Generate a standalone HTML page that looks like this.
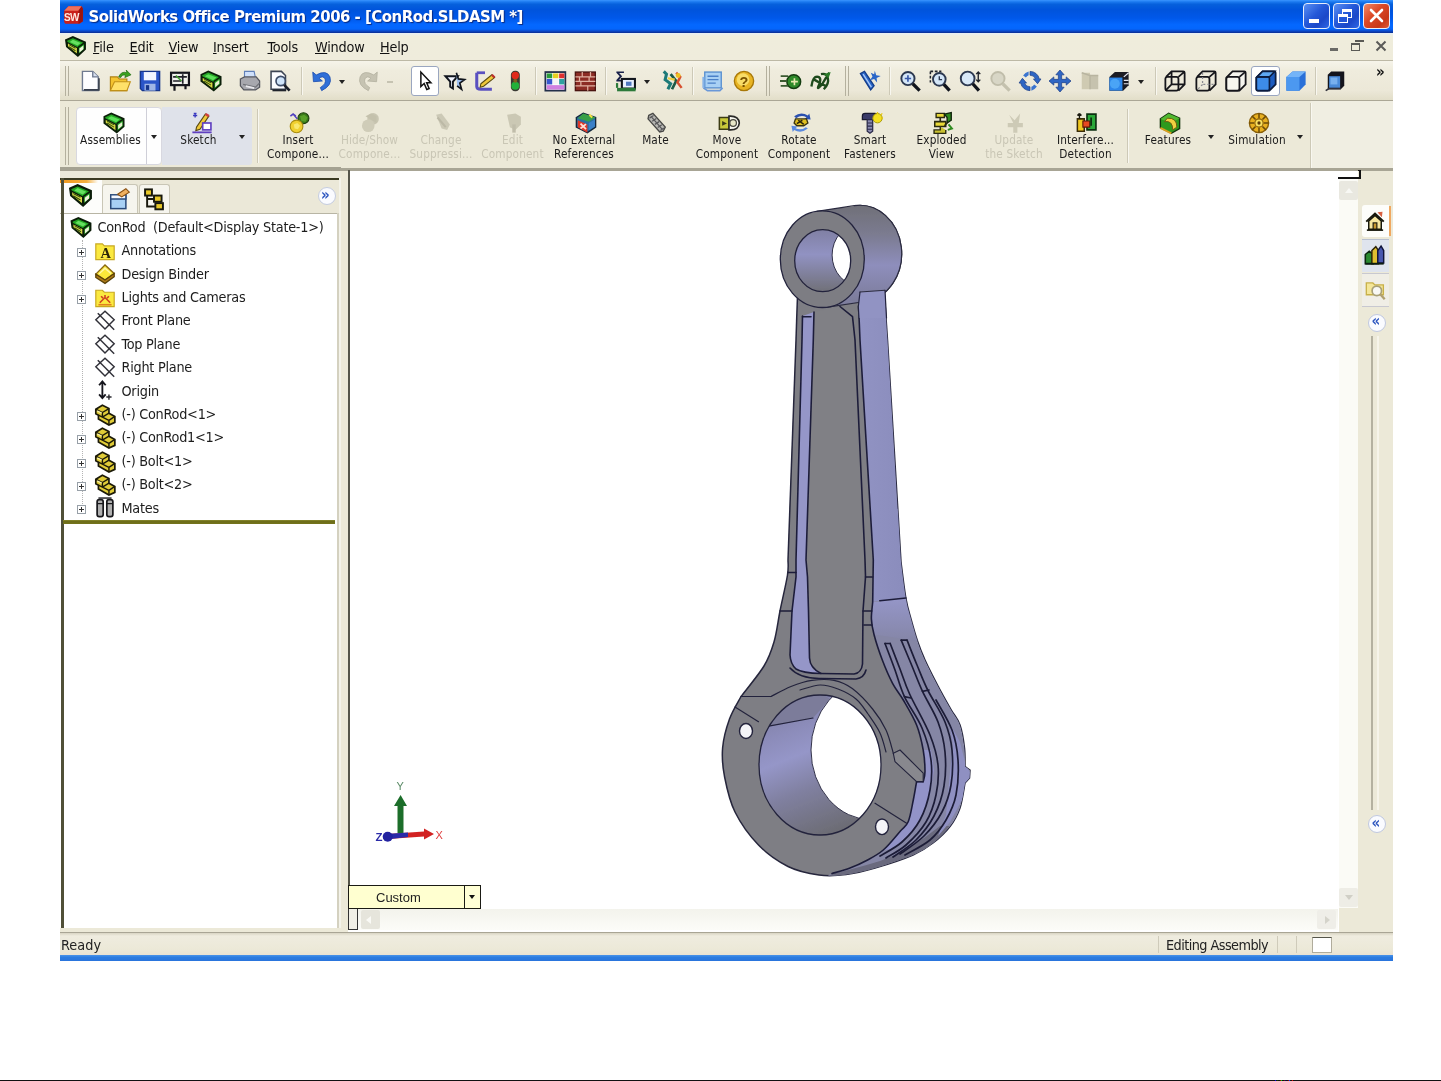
<!DOCTYPE html>
<html>
<head>
<meta charset="utf-8">
<title>SolidWorks Office Premium 2006 - [ConRod.SLDASM *]</title>
<style>
html,body{margin:0;padding:0;background:#fff;}
body{width:1441px;height:1081px;position:relative;overflow:hidden;font-family:"DejaVu Sans Condensed","DejaVu Sans","Liberation Sans",sans-serif;font-size:14.3px;color:#000;}
.abs{position:absolute;}
.ic{overflow:visible;}
#win{position:absolute;left:60px;top:0;width:1333px;height:961px;background:#ece9d8;overflow:hidden;filter:blur(0.45px);}
#title{position:absolute;left:0;top:0;width:1333px;height:33px;background:linear-gradient(#3a95ff 0%,#1a78ee 6%,#0660dc 13%,#0054dc 30%,#0058ea 55%,#0468ff 75%,#0466fc 88%,#0a48c8 94%,#0a2c90 100%);}
#title .t{position:absolute;left:28.5px;top:7.2px;font-weight:bold;font-size:16.6px;line-height:20px;color:#fff;letter-spacing:-0.5px;white-space:nowrap;text-shadow:1px 1px 1px #0a2a80;}
.tbtn{position:absolute;top:3px;width:27px;height:26px;border:1.5px solid #e8eefc;border-radius:4px;box-sizing:border-box;background:linear-gradient(135deg,#5a90f4,#2458d8 45%,#1c48c8 70%,#2f68e6);}
#menubar{position:absolute;left:0;top:33px;width:1333px;height:27px;background:linear-gradient(#e6eef6 0,#efeddc 3px,#efecdc 100%);}
#menubar span{position:absolute;top:5px;font-size:14.3px;line-height:18px;white-space:nowrap;color:#111;letter-spacing:-0.2px;}
#menubar u{text-decoration-thickness:1px;text-underline-offset:1px;}
#tb1{position:absolute;left:0;top:60px;width:1333px;height:40px;background:linear-gradient(#f6f4ea 0%,#efecdd 25%,#ece8d8 75%,#e2dec9 100%);border-top:1.5px solid #bdb9a6;box-sizing:border-box;}
#tb2{position:absolute;left:0;top:100px;width:1333px;height:70px;background:#ece9d8;border-top:1.5px solid #aba796;box-sizing:border-box;}
.grip{position:absolute;width:2px;border-left:1.5px solid #b4b09e;border-right:1.5px solid #b4b09e;box-sizing:content-box;}
.sep{position:absolute;width:1px;background:#cdc9b7;box-shadow:1px 0 0 #f8f7f0;}
.lbl{position:absolute;font-size:11.7px;line-height:14.4px;text-align:center;white-space:nowrap;transform:translateX(-50%);color:#1a1a1a;letter-spacing:0.15px;}
.dis{color:#c9c6b5;}
.dd{position:absolute;width:0;height:0;border-left:3.5px solid transparent;border-right:3.5px solid transparent;border-top:4px solid #222;}
#left{position:absolute;left:0;top:170px;width:289px;height:762px;background:#ece9d8;}
.tree{position:absolute;font-size:14.3px;line-height:18px;white-space:nowrap;color:#1c1c1c;letter-spacing:-0.25px;}
.pm{position:absolute;width:9px;height:9px;border:1px solid #98a0a8;background:#fff;box-sizing:border-box;}
.pm:before{content:"";position:absolute;left:1px;top:3px;width:5px;height:1px;background:#333;}
.pm:after{content:"";position:absolute;left:3px;top:1px;width:1px;height:5px;background:#333;}
#view{position:absolute;left:288px;top:170px;width:1012px;height:762px;background:#fff;}
#status{position:absolute;left:0;top:932px;width:1333px;height:24px;background:linear-gradient(#d9d5c4 0,#efecdf 3px,#ece9d8 70%,#e9e0d2 100%);border-top:1.5px solid #a9a595;box-sizing:border-box;}
#status span{position:absolute;top:3px;font-size:14.3px;line-height:18px;color:#222;letter-spacing:-0.55px;white-space:nowrap;}
#bottomblue{position:absolute;left:0;top:955px;width:1333px;height:6px;background:linear-gradient(#4a93e8,#2b7be0 40%,#2a74dc);}

</style>
</head>
<body>
<div id="win">
<div id="title">
<svg class="abs ic" style="left:2.5px;top:5px" width="21" height="20" viewBox="0 0 16 16" ><path d="M0.5,4.5 L4,1 H14.5 L15.5,3 V13 L13,15 H1.5 L0.5,13.5 Z" fill="#c8201a"/><path d="M0.5,4.5 L4,1 H14.5 L12,4.5 Z" fill="#f0705c"/><path d="M12,4.5 L14.5,1 L15.5,3 V13 L12,15 Z" fill="#9c1410"/><text x="6.3" y="12.6" font-family="Liberation Sans, sans-serif" font-weight="bold" font-size="8" text-anchor="middle" fill="#ffe8e0" letter-spacing="-0.6">SW</text></svg>
<div class="t">SolidWorks Office Premium 2006 - [ConRod.SLDASM *]</div>
<div class="tbtn" style="left:1243px"><div class="abs" style="left:5px;top:15px;width:10px;height:4px;background:#fff"></div></div>
<div class="tbtn" style="left:1273px"><div class="abs" style="left:8px;top:5px;width:10px;height:9px;border:1.5px solid #fff;border-top-width:3px;box-sizing:border-box"></div><div class="abs" style="left:4px;top:10px;width:10px;height:9px;border:1.5px solid #fff;border-top-width:3px;box-sizing:border-box;background:#2458d8"></div></div>
<div class="tbtn" style="left:1303px;background:linear-gradient(135deg,#f08868,#dc4a28 40%,#c83818 75%,#e05a34)"><svg class="abs" style="left:5px;top:4px" width="15" height="15" viewBox="0 0 15 15"><path d="M2,2 L13,13 M13,2 L2,13" stroke="#fff" stroke-width="2.6" stroke-linecap="round"/></svg></div>
</div>
<div id="menubar">
<svg class="abs ic" style="left:5px;top:3px" width="21" height="21" viewBox="0 0 16 16" ><path d="M0.8,3.2 L6,0.8 L15.2,4.8 V10 L9.8,15 L1.5,8 Z" fill="#23a623" stroke="#0a1c08" stroke-width="1.5"/><path d="M6,2.8 L12,5.4 L9.5,7.3 L3.6,4.5 Z" fill="#66e060"/><path d="M1.8,5 L9.5,9 V14.3 L1.8,8 Z" fill="#dcdc48" stroke="#0a1c08" stroke-width=".9"/><path d="M3,6.6 L8,9.3 M3,8.2 L8,11.2" stroke="#33500e" stroke-width=".8"/><path d="M10,8.6 L15,5 M10,8.6 V14.6" fill="none" stroke="#0a1c08" stroke-width="1.2"/><path d="M11,9.6 L14,7.3 V10 L11,12.6 Z" fill="#f0f4dc"/></svg>
<span style="left:33px"><u>F</u>ile</span>
<span style="left:69.5px"><u>E</u>dit</span>
<span style="left:108.5px"><u>V</u>iew</span>
<span style="left:153px"><u>I</u>nsert</span>
<span style="left:207.5px"><u>T</u>ools</span>
<span style="left:255px"><u>W</u>indow</span>
<span style="left:320px"><u>H</u>elp</span>
<div class="abs" style="left:1270px;top:15px;width:8px;height:2.5px;background:#6a6a66"></div>
<div class="abs" style="left:1291px;top:10px;width:9px;height:8px;border:1.3px solid #5a5a56;border-top-width:2.5px;box-sizing:border-box"></div>
<div class="abs" style="left:1294.5px;top:6.5px;width:9px;height:2.5px;background:#5a5a56"></div>
<svg class="abs ic" style="left:1315px;top:7px" width="12" height="12" viewBox="0 0 12 12"><path d="M1.5,1.5 L10.5,10.5 M10.5,1.5 L1.5,10.5" stroke="#5a5a58" stroke-width="2"/></svg>
</div>
<div id="tb1">
<div class="grip" style="left:5px;top:5px;height:30px"></div>
<svg class="abs ic" style="left:18.5px;top:8.5px" width="22" height="22" viewBox="0 0 16 16" ><path d="M2.5,1 H10 L14,5 V15 H2.5 Z" fill="#fdfdff" stroke="#6f7a90" stroke-width="1"/><path d="M10,1 V5 H14" fill="#d8e0f0" stroke="#6f7a90" stroke-width="1"/><path d="M3.5,14.5 H14.5 V6" fill="none" stroke="#39404e" stroke-width="1.2"/></svg>
<svg class="abs ic" style="left:49px;top:8.5px" width="22" height="22" viewBox="0 0 16 16" ><path d="M1,5 H6 L7.5,6.5 H13 V15 H1 Z" fill="#f4c430" stroke="#b08010" stroke-width=".8"/><path d="M1,15 L4,8.5 H15.5 L13,15 Z" fill="#ffe169" stroke="#c09018" stroke-width=".8"/><path d="M7,5 Q9,0.5 13,2 L12.5,0 L16,3.5 L11.5,5.5 L12,3.8 Q9.5,3 8.5,5.5 Z" fill="#3aa21e" stroke="#1e6a10" stroke-width=".5"/></svg>
<svg class="abs ic" style="left:79px;top:8.5px" width="22" height="22" viewBox="0 0 16 16" ><path d="M1,1 H15 V15 H2.5 L1,13.5 Z" fill="#2a55c8" stroke="#16358a" stroke-width="1"/><rect x="3.5" y="1.5" width="9" height="6" fill="#f2f6ff"/><rect x="4" y="10" width="8" height="5" fill="#9fb6e6"/><rect x="5" y="11" width="2.4" height="3.5" fill="#16358a"/></svg>
<svg class="abs ic" style="left:109px;top:8.5px" width="22" height="22" viewBox="0 0 16 16" ><rect x="1.5" y="2" width="13" height="9" fill="#f2f2ee" stroke="#15151c" stroke-width="1.6"/><path d="M3,5 H13 M3,8 H9 M10,3 V10" stroke="#202028" stroke-width="1.2"/><path d="M4,11 V15 M12,11 V14" stroke="#15151c" stroke-width="1.6"/><path d="M5,4 L9,8" stroke="#40a030" stroke-width="1.2"/></svg>
<svg class="abs ic" style="left:139.5px;top:8.5px" width="22" height="22" viewBox="0 0 16 16" ><path d="M1,3.5 L6,1 L15,5 V10.5 L10,14.8 L1,8 Z" fill="#25a825" stroke="#0c200a" stroke-width="1.3"/><path d="M6,3 L12,5.5 L9.5,7.5 L3.5,4.6 Z" fill="#5ee05a"/><path d="M1.5,5 L9.5,9 V14.2 L1.5,8 Z" fill="#d8d840" stroke="#0c200a" stroke-width=".9"/><path d="M3,6.5 L8,9.2 M3,8 L8,11" stroke="#3a5a10" stroke-width=".8"/><path d="M10,8.5 L15,5 M10,8.5 V14.5" fill="none" stroke="#0c200a" stroke-width="1.1"/><path d="M11,9.5 L14,7.2 V10 L11,12.6 Z" fill="#e8f0d0"/></svg>
<svg class="abs ic" style="left:179px;top:8.5px" width="22" height="22" viewBox="0 0 16 16" ><path d="M4,1 H11 L12,6 H4 Z" fill="#cfe0fa" stroke="#6080b8" stroke-width=".8"/><path d="M1,6.5 L4,5 H12.5 L15,8 V12.5 L12,14.5 H3.5 L1,11.5 Z" fill="#a7a8ae" stroke="#54565e" stroke-width=".9"/><path d="M3,10.5 L12,12.5 L15,9.5" fill="none" stroke="#707278" stroke-width=".9"/><path d="M5,11.8 L11,13.2" stroke="#e8e8ec" stroke-width="1.3"/></svg>
<svg class="abs ic" style="left:209px;top:8.5px" width="22" height="22" viewBox="0 0 16 16" ><path d="M1.5,1 H9 L12,4 V14 H1.5 Z" fill="#fbfcff" stroke="#3c4454" stroke-width="1.1"/><path d="M2.5,14.8 H12.5" stroke="#20242c" stroke-width="1.4"/><circle cx="8.5" cy="8" r="3.4" fill="#cfe4fa" stroke="#3d4c68" stroke-width="1.2"/><path d="M11,10.8 L15,15" stroke="#1a1e28" stroke-width="2"/></svg>
<div class="sep" style="left:241px;top:6px;height:28px"></div>
<svg class="abs ic" style="left:250px;top:8.5px" width="22" height="22" viewBox="0 0 16 16" ><path d="M2,1.5 L2.5,8.5 L9,8 L6.6,6 Q9.5,3.8 11,6.5 Q12.2,10 7.5,12.8 L8.5,15 Q16.5,11 14.5,5 Q12,-0.5 4.5,3.6 Z" fill="#2f6fd8" stroke="#1d4fb0" stroke-width=".6"/></svg>
<div class="dd" style="left:279.0px;top:19px;border-top-color:#222"></div>
<svg class="abs ic" style="left:298px;top:8.5px" width="22" height="22" viewBox="0 0 16 16" ><path d="M14,1.5 L13.5,8.5 L7,8 L9.4,6 Q6.5,3.8 5,6.5 Q3.8,10 8.5,12.8 L7.5,15 Q-0.5,11 1.5,5 Q4,-0.5 11.5,3.6 Z" fill="#c6c3b2" stroke="#b4b1a0" stroke-width=".6"/></svg>
<div class="abs" style="left:327px;top:20px;width:6px;height:2px;background:#c6c3b2"></div>
<div class="abs" style="left:350.5px;top:5px;width:28.5px;height:30px;background:#fff;border:1px solid #9aa6c0;border-radius:3px;box-sizing:border-box"></div>
<svg class="abs ic" style="left:354px;top:8.5px" width="22" height="22" viewBox="0 0 16 16" ><path d="M5,1.5 V12 L7.4,9.8 L9.3,14.2 L11,13.5 L9.2,9.2 H12.3 Z" fill="#fff" stroke="#111" stroke-width="1.1"/></svg>
<svg class="abs ic" style="left:384px;top:8.5px" width="22" height="22" viewBox="0 0 16 16" ><path d="M1,4.5 H10 L6.5,8.5 V13.5 L4.5,12.2 V8.5 Z" fill="#f0f4ff" stroke="#10141c" stroke-width="1.4"/><path d="M9,2 L10.5,6.5 L15,7 L11.5,9.5 L12.8,14 L9.5,11.5" fill="#9ec0f0" stroke="#10141c" stroke-width="1.2"/></svg>
<svg class="abs ic" style="left:414px;top:8.5px" width="22" height="22" viewBox="0 0 16 16" ><path d="M2,2 V12 Q2,14 5,14 H13" fill="none" stroke="#5a50c0" stroke-width="2.2"/><path d="M2,2 H8" stroke="#5a50c0" stroke-width="2"/><path d="M5,10 L13,3.5 L15,5.5 L7,11.8 L4.5,12.5 Z" fill="#f0c83a" stroke="#5a4a10" stroke-width=".8"/><path d="M13,3.5 L15,5.5" stroke="#c03030" stroke-width="1.6"/></svg>
<svg class="abs ic" style="left:444px;top:8.5px" width="22" height="22" viewBox="0 0 16 16" ><rect x="5" y="0.5" width="6.5" height="15" rx="3" fill="#3a3a32"/><circle cx="8.2" cy="4" r="2.7" fill="#e02a1c"/><circle cx="8.2" cy="11.5" r="2.9" fill="#22b03a"/><circle cx="8.2" cy="7.8" r="1.4" fill="#806020"/></svg>
<div class="sep" style="left:475px;top:6px;height:28px"></div>
<svg class="abs ic" style="left:483.5px;top:8.5px" width="22" height="22" viewBox="0 0 16 16" ><rect x="1" y="1.5" width="14.5" height="13.5" fill="#fff" stroke="#23304a" stroke-width="1.3"/><rect x="2" y="2.5" width="4" height="3.5" fill="#2a9a3a"/><rect x="6.5" y="2.5" width="4" height="3.5" fill="#e8d020"/><rect x="11" y="2.5" width="3.8" height="3.5" fill="#e03030"/><rect x="2" y="6.5" width="4" height="4" fill="#3858d0"/><rect x="6.5" y="6.5" width="4" height="4" fill="#f4f4f4"/><rect x="11" y="6.5" width="3.8" height="4" fill="#30a0a0"/><rect x="2" y="11" width="12.8" height="3.2" fill="#d080e0"/></svg>
<svg class="abs ic" style="left:514px;top:8.5px" width="22" height="22" viewBox="0 0 16 16" ><rect x="1" y="1.5" width="14.5" height="13.5" fill="#8c2c24" stroke="#4a1410" stroke-width="1"/><path d="M1,5 H15.5 M1,8.3 H15.5 M1,11.6 H15.5 M6,1.5 V5 M11,5 V8.3 M5,8.3 V11.6 M10,11.6 V15 M12,1.5 V5 M4,5 V8.3" stroke="#e0b0a0" stroke-width=".9"/></svg>
<div class="sep" style="left:545px;top:6px;height:28px"></div>
<svg class="abs ic" style="left:555px;top:8.5px" width="22" height="22" viewBox="0 0 16 16" ><path d="M1,1 H6.5 V2.2 H3 L5.2,4.6 L3,7 H6.5 V8.3 H1 V7.3 L3.4,4.6 L1,2 Z" fill="#18204a"/><rect x="5" y="6.5" width="9.5" height="7" fill="#e8f0ff" stroke="#10141c" stroke-width="1.5"/><rect x="8" y="8.5" width="4" height="3" fill="#5078c0"/><path d="M1.5,13 H15 V15.5 H1.5 Z" fill="#2c7a3a"/><path d="M1.5,9.5 V13" stroke="#2c7a3a" stroke-width="1.6"/></svg>
<div class="dd" style="left:583.5px;top:19px;border-top-color:#222"></div>
<svg class="abs ic" style="left:601px;top:8.5px" width="22" height="22" viewBox="0 0 16 16" ><path d="M2,1 L4,3 L3,7 L7,10 L5,14" fill="none" stroke="#1d7a78" stroke-width="2.2"/><path d="M7,3 L11,8 L8,14" fill="none" stroke="#1d5a48" stroke-width="2"/><path d="M11,2 L14,5 L12,9 L15,13" fill="none" stroke="#d85030" stroke-width="1.8"/><circle cx="12.5" cy="4" r="1.8" fill="#f0c020"/><path d="M5,6 L10,7" stroke="#f0d040" stroke-width="1.6"/></svg>
<div class="sep" style="left:632px;top:6px;height:28px"></div>
<svg class="abs ic" style="left:642px;top:8.5px" width="22" height="22" viewBox="0 0 16 16" ><rect x="2" y="1.5" width="12" height="11.5" fill="#a8d0f4" stroke="#5a90d0" stroke-width="1"/><path d="M4,4.5 H12 M4,7 H12 M4,9.5 H10" stroke="#4a80c8" stroke-width="1"/><path d="M1,13 L4,15 H13 L15,13" fill="none" stroke="#6a98d8" stroke-width="1.2"/><path d="M1,5 V13" stroke="#88b4e8" stroke-width="1.5"/></svg>
<svg class="abs ic" style="left:673px;top:8.5px" width="22" height="22" viewBox="0 0 16 16" ><circle cx="8" cy="8" r="7" fill="#e8b424" stroke="#a87808" stroke-width="1"/><circle cx="7.3" cy="7" r="4.6" fill="#f8dc68"/><text x="8" y="12" font-family="Liberation Sans, sans-serif" font-weight="bold" font-size="10.5" text-anchor="middle" fill="#7a5200">?</text></svg>
<div class="grip" style="left:706px;top:5px;height:30px"></div>
<svg class="abs ic" style="left:719.5px;top:8.5px" width="22" height="22" viewBox="0 0 16 16" ><circle cx="10" cy="8.5" r="5" fill="#2f8a2a" stroke="#143c10" stroke-width="1.1"/><path d="M0.5,4.5 H6 M0,8 H5 M0.5,11.5 H6" stroke="#3a5a30" stroke-width="1.3"/><path d="M8,8.5 H13 M10.5,6 V11" stroke="#e8e8b0" stroke-width="1.2"/></svg>
<svg class="abs ic" style="left:749.5px;top:8.5px" width="22" height="22" viewBox="0 0 16 16" ><path d="M1,12 Q2,4 6,5 Q9,6 6,12 Q5,15 9,10 Q12,5 14,2 M8,3 Q12,2 13,6 Q14,10 10,14 M3,7 L12,12" fill="none" stroke="#1e4a1c" stroke-width="1.7"/><path d="M10,3 L15,1.5 L13.5,6" fill="#2a7a28"/></svg>
<div class="grip" style="left:785px;top:5px;height:30px"></div>
<svg class="abs ic" style="left:799px;top:8.5px" width="22" height="22" viewBox="0 0 16 16" ><path d="M1,2.5 L4,1 L11,11.5 L8.5,14.5 Z" fill="#2a66c8" stroke="#143c88" stroke-width=".9"/><path d="M3,3 L9,12.5" stroke="#a8c8f8" stroke-width="1"/><path d="M11.5,0.5 L12.5,3.8 L15.8,4.4 L12.8,5.8 L13.2,9 L11,6.6 L8,7.4 L9.8,4.8 L8.6,2 L11,3 Z" fill="#2a66c8"/></svg>
<div class="sep" style="left:829px;top:6px;height:28px"></div>
<svg class="abs ic" style="left:838.5px;top:8.5px" width="22" height="22" viewBox="0 0 16 16" ><circle cx="6.5" cy="6.2" r="4.8" fill="#d4e6f8" stroke="#2c3850" stroke-width="1.4"/><path d="M10,10 L15,15" stroke="#10141c" stroke-width="2.4"/><path d="M4.2,6.2 H8.8 M6.5,3.9 V8.5" stroke="#3858a8" stroke-width="1.2"/></svg>
<svg class="abs ic" style="left:868.5px;top:8.5px" width="22" height="22" viewBox="0 0 16 16" ><path d="M1,1 H9 M1,1 V9" fill="none" stroke="#20242c" stroke-width="1.1" stroke-dasharray="2 1.2"/><circle cx="7.5" cy="6.8" r="4.6" fill="#d4e6f8" stroke="#2c3850" stroke-width="1.4"/><path d="M10.8,10.4 L15,15" stroke="#10141c" stroke-width="2.4"/><path d="M7.5,4.5 V7 H9.5" fill="none" stroke="#2c3850" stroke-width="1"/></svg>
<svg class="abs ic" style="left:898.5px;top:8.5px" width="22" height="22" viewBox="0 0 16 16" ><circle cx="6.3" cy="6.2" r="5" fill="#d8e8f8" stroke="#2c3850" stroke-width="1.4"/><path d="M10,10 L14.5,15" stroke="#10141c" stroke-width="2.4"/><path d="M14,1.5 V8.5 M12.5,3 L14,1.5 L15.5,3 M12.5,7 L14,8.5 L15.5,7" fill="none" stroke="#20242c" stroke-width="1"/></svg>
<svg class="abs ic" style="left:928.5px;top:8.5px" width="22" height="22" viewBox="0 0 16 16" ><circle cx="6.5" cy="6.2" r="4.8" fill="#d8d6c6" stroke="#c0bdaa" stroke-width="1.4"/><path d="M10,10 L15,15" stroke="#c4c1ae" stroke-width="2.4"/></svg>
<svg class="abs ic" style="left:958.5px;top:8.5px" width="22" height="22" viewBox="0 0 16 16" ><path d="M8,1 A7,7 0 0 1 14.8,6.5 L16,6.5 L13.5,10 L10.5,6.5 L12,6.5 A4.2,4.2 0 0 0 8,3.8 Z" fill="#2f66c4" stroke="#1a3c84" stroke-width=".5"/><path d="M8,15 A7,7 0 0 1 1.2,9.5 L0,9.5 L2.5,6 L5.5,9.5 L4,9.5 A4.2,4.2 0 0 0 8,12.2 Z" fill="#2f66c4" stroke="#1a3c84" stroke-width=".5"/><path d="M3,4 A7,7 0 0 1 7,1 V3.8 A4.2,4.2 0 0 0 5,5.5 Z M13,12 A7,7 0 0 1 9,15 V12.2 A4.2,4.2 0 0 0 11,10.5 Z" fill="#3a74d0"/></svg>
<svg class="abs ic" style="left:988.5px;top:8.5px" width="22" height="22" viewBox="0 0 16 16" ><path d="M8,0 L11,3.5 H9.2 V6.8 H12.5 V5 L16,8 L12.5,11 V9.2 H9.2 V12.5 H11 L8,16 L5,12.5 H6.8 V9.2 H3.5 V11 L0,8 L3.5,5 V6.8 H6.8 V3.5 H5 Z" fill="#2f66c4" stroke="#1a3c84" stroke-width=".5"/></svg>
<svg class="abs ic" style="left:1018.5px;top:8.5px" width="22" height="22" viewBox="0 0 16 16" ><rect x="2" y="2" width="6" height="12" fill="#cfcab2"/><rect x="8" y="4" width="6" height="10" fill="#c6c2ae"/><path d="M2,2 L8,4 V14 M8,4 H14" stroke="#b8b4a0" fill="none"/></svg>
<svg class="abs ic" style="left:1048px;top:8.5px" width="22" height="22" viewBox="0 0 16 16" ><path d="M1,5 L5,1.5 H15 V11 L11,15 H1 Z" fill="#1c1c24"/><path d="M1,5.5 H10.5 V15 H1 Z" fill="#2d86ea"/><circle cx="5" cy="10" r="3.6" fill="#4aa4f6"/><path d="M11.5,5 L15,2 M11.5,7.5 H15 M11.5,10 H15" stroke="#e8e8f0" stroke-width=".9"/></svg>
<div class="dd" style="left:1077.5px;top:19px;border-top-color:#222"></div>
<div class="sep" style="left:1095px;top:6px;height:28px"></div>
<svg class="abs ic" style="left:1104px;top:8.5px" width="22" height="22" viewBox="0 0 16 16" ><g fill="none" stroke="#15151a" stroke-width="1.3"><rect x="1" y="5" width="9.5" height="10" rx="1.5"/><path d="M1.5,5 L5.5,1 H14 Q15,1 15,2 V10.5 L10.5,15 M10.5,5 L15,1.2 M5.5,1 V10.5 H15 M5.5,10.5 L1,15"/></g></svg>
<svg class="abs ic" style="left:1134.5px;top:8.5px" width="22" height="22" viewBox="0 0 16 16" ><g fill="none" stroke="#15151a" stroke-width="1.3"><rect x="1" y="5" width="9.5" height="10" rx="1.5"/><path d="M1.5,5 L5.5,1 H14 Q15,1 15,2 V10.5 L10.5,15 M10.5,5 L15,1.2"/><path d="M5.5,2 V10.5 H14 M5.5,10.5 L2,14" stroke="#8a8a90" stroke-width=".9" stroke-dasharray="1.5 1.5"/></g></svg>
<svg class="abs ic" style="left:1164.5px;top:8.5px" width="22" height="22" viewBox="0 0 16 16" ><g fill="#f6f5ee" stroke="#15151a" stroke-width="1.3"><path d="M1.5,5 L5.5,1 H14 Q15,1 15,2 V10.5 L10.5,15 H2 Q1,15 1,14 V5.5 Z"/><rect x="1" y="5" width="9.5" height="10" rx="1.5"/><path d="M10.5,5 L15,1.2" fill="none"/></g></svg>
<div class="abs" style="left:1191px;top:5px;width:29px;height:30px;background:#fff;border:1px solid #9aa6c0;border-radius:3px;box-sizing:border-box"></div>
<svg class="abs ic" style="left:1195px;top:8.5px" width="22" height="22" viewBox="0 0 16 16" ><path d="M1.5,5 L5.5,1 H14 Q15,1 15,2 V10.5 L10.5,15 H2 Q1,15 1,14 V5.5 Z" fill="#1d5cc0" stroke="#0c1c40" stroke-width="1.3"/><rect x="1" y="5" width="9.5" height="10" rx="1.2" fill="#3d8be8" stroke="#0c1c40" stroke-width="1.2"/><path d="M1.5,5 L5.5,1 H14.5 L10.5,5 Z" fill="#5ea8f4" stroke="#0c1c40" stroke-width="1.1"/></svg>
<svg class="abs ic" style="left:1225px;top:8.5px" width="22" height="22" viewBox="0 0 16 16" ><path d="M1,5 L5.5,1 H15 V10.5 L10.5,15 H1 Z" fill="#2a70d8"/><rect x="1" y="5" width="9.5" height="10" fill="#4c98f0"/><path d="M1,5 L5.5,1 H15 L10.5,5 Z" fill="#74b4f8"/></svg>
<div class="sep" style="left:1255px;top:6px;height:28px"></div>
<svg class="abs ic" style="left:1264.5px;top:8.5px" width="22" height="22" viewBox="0 0 16 16" ><path d="M2,3.5 L4.5,1 H14 V11.5 L11.5,14 H2 Z" fill="#14141c"/><rect x="3" y="4.5" width="8" height="8.5" fill="#4a8ad8"/><rect x="4" y="5.5" width="5" height="5" fill="#78b0ee"/><path d="M0.5,15 L3,13.5 H11.5" stroke="#30303a" stroke-width="1.2" fill="none"/></svg>
<div class="abs" style="left:1316px;top:3px;font-size:15px;font-weight:bold;line-height:16px;color:#111;filter:blur(.3px)">»</div>
</div>
<div id="tb2">
<div class="grip" style="left:5px;top:6px;height:58px"></div>
<div class="abs" style="left:16px;top:6px;width:86px;height:58px;background:#fefefe;border:1px solid #d8d8e0;border-radius:4px;box-sizing:border-box"></div>
<div class="abs" style="left:86px;top:7px;width:1px;height:56px;background:#cfcfd8"></div>
<div class="abs" style="left:102px;top:6px;width:90px;height:58px;background:#dfe2ea;border-radius:0 3px 3px 0"></div>
<div class="sep" style="left:197px;top:8px;height:54px"></div>
<div class="abs" style="left:1251px;top:0;width:82px;height:69px;background:#f0eee2"></div>
<div class="sep" style="left:1250px;top:2px;height:66px"></div>
<svg class="abs ic" style="left:42.5px;top:10.5px" width="22" height="22" viewBox="0 0 16 16" ><path d="M1,3.5 L6,1 L15,5 V10.5 L10,14.8 L1,8 Z" fill="#25a825" stroke="#0c200a" stroke-width="1.3"/><path d="M6,3 L12,5.5 L9.5,7.5 L3.5,4.6 Z" fill="#5ee05a"/><path d="M1.5,5 L9.5,9 V14.2 L1.5,8 Z" fill="#d8d840" stroke="#0c200a" stroke-width=".9"/><path d="M3,6.5 L8,9.2 M3,8 L8,11" stroke="#3a5a10" stroke-width=".8"/><path d="M10,8.5 L15,5 M10,8.5 V14.5" fill="none" stroke="#0c200a" stroke-width="1.1"/><path d="M11,9.5 L14,7.2 V10 L11,12.6 Z" fill="#e8f0d0"/></svg><div class="lbl" style="left:50.5px;top:32px">Assemblies</div>
<div class="dd" style="left:91.0px;top:34px;border-top-color:#222"></div>
<svg class="abs ic" style="left:130.5px;top:10.5px" width="22" height="22" viewBox="0 0 16 16" ><path d="M2,1 L4,1 M3,1 V4 M1.5,2.5 H4.5" stroke="#3838c0" stroke-width="1"/><path d="M4,11 L10.5,1.5 L13,3 L6.5,12.5 L3.5,13.5 Z" fill="#f0c83a" stroke="#5a4a10" stroke-width=".8"/><path d="M10.5,1.5 L13,3" stroke="#d04040" stroke-width="1.8"/><rect x="8.5" y="8" width="6" height="5" fill="#fff" stroke="#6040c0" stroke-width="1.2"/><path d="M1,14.8 H15" stroke="#6040c0" stroke-width="1.3"/></svg><div class="lbl" style="left:138.5px;top:32px">Sketch</div>
<div class="dd" style="left:179.0px;top:34px;border-top-color:#222"></div>
<svg class="abs ic" style="left:228.5px;top:10.5px" width="22" height="22" viewBox="0 0 16 16" ><circle cx="10.5" cy="4.5" r="4" fill="#3a7a1a" stroke="#1c3c0c" stroke-width=".8"/><path d="M8,3 L11,2 L13.5,4 L12,7 L9,6.5 Z" fill="#58a028"/><circle cx="5.5" cy="10.5" r="4.6" fill="#f0d030" stroke="#a88c10" stroke-width=".8"/><path d="M3.5,9 L6,8 L8,10 L6.5,12.5 L4,12 Z" fill="#f8e870"/><path d="M1,3 L3,1.5 L5,3 M3,1.5 L6,5" fill="none" stroke="#5040c0" stroke-width="1.1"/></svg><div class="lbl" style="left:238px;top:32px">Insert<br>Compone...</div>
<svg class="abs ic" style="left:300.0px;top:10.5px" width="22" height="22" viewBox="0 0 16 16" ><circle cx="9.5" cy="5" r="4.2" fill="#c9c6b2"/><circle cx="6" cy="10" r="4.6" fill="#cfccb8"/><path d="M4,3 L8,1 L12,3 V8" fill="#c4c1ac"/></svg><div class="lbl dis" style="left:309.5px;top:32px">Hide/Show<br>Compone...</div>
<svg class="abs ic" style="left:371.5px;top:10.5px" width="22" height="22" viewBox="0 0 16 16" ><path d="M3,2 L7,1 L13,9 L11,13 L7,12 Z" fill="#ccc9b6"/><path d="M4,4 L10,11" stroke="#bcb9a6" stroke-width="1.5"/></svg><div class="lbl dis" style="left:381px;top:32px">Change<br>Suppressi...</div>
<svg class="abs ic" style="left:443.0px;top:10.5px" width="22" height="22" viewBox="0 0 16 16" ><path d="M3,2 L9,1 L13,3.5 V9 L9,13 L5,11 Z" fill="#cbc8b4"/><path d="M8,9 V15" stroke="#c0bdaa" stroke-width="2.5"/></svg><div class="lbl dis" style="left:452.5px;top:32px">Edit<br>Component</div>
<svg class="abs ic" style="left:514.5px;top:10.5px" width="22" height="22" viewBox="0 0 16 16" ><path d="M1,4 L6,1 L15,4 V11 L9,15 L1,11 Z" fill="#2a6ea0" stroke="#14283c" stroke-width="1"/><path d="M6,1 L15,4 L10,7 L2,4.5 Z" fill="#38a048"/><path d="M2,6 L9,9 V15 L2,11 Z" fill="#e03828"/><path d="M4,8.5 L8,12.5 M8,8.8 L4,12" stroke="#ffe0d8" stroke-width="1.3"/><path d="M10,8 L14.5,5.5 V10.5 L10,13.5 Z" fill="#3a80c8"/><path d="M10.5,2 L12.5,4" stroke="#f0e040" stroke-width="1.4"/></svg><div class="lbl" style="left:524px;top:32px">No External<br>References</div>
<svg class="abs ic" style="left:586.0px;top:10.5px" width="22" height="22" viewBox="0 0 16 16" ><path d="M2,2.5 L5,1 L14,11 L12.5,14 L10,14.5 L1.5,5 Z" fill="#b8b8b4" stroke="#484846" stroke-width="1"/><path d="M3.5,3 L12,12.8 M2.5,4.5 L5.5,2.5 M4.5,6.8 L7.5,4.8 M6.5,9 L9.5,7 M8.5,11.2 L11.5,9.2 M10.5,13.4 L13,11.6" stroke="#58585a" stroke-width=".9" fill="none"/></svg><div class="lbl" style="left:595.5px;top:32px">Mate</div>
<svg class="abs ic" style="left:657.5px;top:10.5px" width="22" height="22" viewBox="0 0 16 16" ><path d="M1,4 H8 V12.5 H1 Z" fill="#c8c83a" stroke="#3c3c14" stroke-width="1.1"/><path d="M3,6.5 L6.5,8.3 L3,10 Z" fill="#3a3a18"/><path d="M8,3 Q15,2.5 15.5,8 Q15,13.5 8,13 Z" fill="#f8f8f0" stroke="#2a2a28" stroke-width="1.2"/><circle cx="11" cy="8" r="2.4" fill="#e8e8c8" stroke="#4a4a40" stroke-width=".9"/></svg><div class="lbl" style="left:667px;top:32px">Move<br>Component</div>
<svg class="abs ic" style="left:729.5px;top:10.5px" width="22" height="22" viewBox="0 0 16 16" ><path d="M3,3 Q8,-0.5 13,2.5 L14,1 L15,5.5 L10.5,5 L12,3.8 Q8,1.8 4.5,4.5 Z" fill="#2a50b0"/><path d="M4,5 H12 L13,8 L10,10 H5 L3,8 Z" fill="#e0c020" stroke="#3a3410" stroke-width="1"/><path d="M6,6 L10,9 M5,8.5 L9,6" stroke="#2a2408" stroke-width="1.1"/><path d="M13,12 Q8,16 3,13 L2,14.5 L1,10 L5.5,10.5 L4,11.8 Q8,13.8 11.5,11 Z" fill="#5a8ae0"/></svg><div class="lbl" style="left:739px;top:32px">Rotate<br>Component</div>
<svg class="abs ic" style="left:800.5px;top:10.5px" width="22" height="22" viewBox="0 0 16 16" ><path d="M1,3 Q1,1 3,1 H10 Q12,1 12,3 V5.5 H1 Z" fill="#3a3a68" stroke="#1a1a30" stroke-width=".9"/><path d="M4.5,5.5 H8.5 V14 L6.5,15.5 L4.5,14 Z" fill="#8a8ab0" stroke="#2a2a48" stroke-width=".9"/><path d="M4.5,8 H8.5 M4.5,10.3 H8.5 M4.5,12.5 H8.5" stroke="#2a2a48" stroke-width=".8"/><circle cx="12" cy="4.5" r="3.4" fill="#f4e020" stroke="#a89808" stroke-width=".7"/><path d="M12,0 V1.5 M15.5,1 L14.5,2 M16,4.5 H14.8" stroke="#e8c810" stroke-width=".9"/></svg><div class="lbl" style="left:810px;top:32px">Smart<br>Fasteners</div>
<svg class="abs ic" style="left:872.0px;top:10.5px" width="22" height="22" viewBox="0 0 16 16" ><path d="M3,1 H9 V4 H3 Z" fill="#e8d838" stroke="#2a2a10" stroke-width="1"/><path d="M9,1.5 L14,0.5 V6 L11,8 V4 Z" fill="#2e8a1e" stroke="#10240c" stroke-width="1"/><path d="M2,7 H10 V10.5 H2 Z" fill="#e8d838" stroke="#2a2a10" stroke-width="1.1"/><path d="M6,10.5 V13 H1.5 V15.5 H10 V13" fill="#c8c030" stroke="#2a2a10" stroke-width="1"/><path d="M6,4 V7 M11,8 L9,10" stroke="#2a2a10" stroke-width="1.2"/><path d="M12,9 L14.5,12 L11.5,13" fill="none" stroke="#2e8a1e" stroke-width="1.4"/></svg><div class="lbl" style="left:881.5px;top:32px">Exploded<br>View</div>
<svg class="abs ic" style="left:944.5px;top:10.5px" width="22" height="22" viewBox="0 0 16 16" ><path d="M3,2 L7,6 L11,1 L10,8 H13 V11 H9 V15 H6 V11 H2 V8 H6 Z" fill="#cdcab6"/></svg><div class="lbl dis" style="left:954px;top:32px">Update<br>the Sketch</div>
<svg class="abs ic" style="left:1016.0px;top:10.5px" width="22" height="22" viewBox="0 0 16 16" ><path d="M1,5 H6 V14 H1 Z" fill="#f0c820" stroke="#3a2c08" stroke-width="1.1"/><path d="M8,1.5 H14.5 V13 H8 Z" fill="#2aa838" stroke="#0c3010" stroke-width="1.2"/><path d="M5,6.5 H10 V11 H5 Z" fill="#e84820" stroke="#5a1808" stroke-width=".8"/><path d="M2.5,1 V5 M2.5,1 L1,2.5 M2.5,1 L4,2.5" stroke="#1a1a10" stroke-width="1" fill="none"/><path d="M11,4 V10" stroke="#0c3010" stroke-width="1.3"/></svg><div class="lbl" style="left:1025.5px;top:32px">Interfere...<br>Detection</div>
<div class="sep" style="left:1067px;top:8px;height:54px"></div>
<svg class="abs ic" style="left:1098.5px;top:10.5px" width="22" height="22" viewBox="0 0 16 16" ><path d="M1,5 L7,1 L15,4.5 V12 L9,15.5 L1,11.5 Z" fill="#2e9a1e" stroke="#14330e" stroke-width="1"/><path d="M7,1 L15,4.5 L9,8 L1,5 Z" fill="#50b830"/><path d="M4,7 Q10,6 10,13 L13,11 Q13,4 6,4.5 Z" fill="#f0d040" stroke="#6a5a10" stroke-width=".7"/><path d="M1,11.5 L9,15.5" stroke="#d8a020" stroke-width="1.4"/></svg><div class="lbl" style="left:1108px;top:32px">Features</div>
<div class="dd" style="left:1147.5px;top:34px;border-top-color:#222"></div>
<svg class="abs ic" style="left:1187.5px;top:10.5px" width="22" height="22" viewBox="0 0 16 16" ><circle cx="8" cy="8" r="7" fill="#e8b020" stroke="#8a6008" stroke-width="1"/><circle cx="8" cy="8" r="3" fill="#f8e060" stroke="#8a6008" stroke-width=".8"/><path d="M8,1 V4.5 M8,11.5 V15 M1,8 H4.5 M11.5,8 H15 M3,3 L5.5,5.5 M10.5,10.5 L13,13 M13,3 L10.5,5.5 M3,13 L5.5,10.5" stroke="#6a4a08" stroke-width="1.1"/><circle cx="8" cy="8" r="1.2" fill="#5a3a08"/></svg><div class="lbl" style="left:1197px;top:32px">Simulation</div>
<div class="dd" style="left:1236.5px;top:34px;border-top-color:#222"></div>
</div>
<div id="left">
<div class="abs" style="left:0;top:-3px;width:281px;height:3.5px;background:#a5a292"></div>
<div class="abs" style="left:0;top:0.5px;width:281px;height:7px;background:#ebe9da"></div>
<div class="abs" style="left:0;top:7.5px;width:281px;height:2.5px;background:#3a3a22"></div>
<div class="abs" style="left:0;top:10px;width:281px;height:33px;background:#ebe8d8"></div>
<div class="abs" style="left:0;top:10px;width:42px;height:34px;background:#fdfdfb"></div>
<div class="abs" style="left:0;top:9.5px;width:38px;height:3px;background:linear-gradient(90deg,#f0981c,#f4b040 70%,rgba(244,176,64,0))"></div>
<div class="abs" style="left:42px;top:14px;width:36px;height:29px;background:#f6f5ee;border:1px solid #c9c6b6;border-bottom:none;border-radius:3px 3px 0 0;box-sizing:border-box"></div>
<div class="abs" style="left:79px;top:14px;width:31px;height:29px;background:#f6f5ee;border:1px solid #c9c6b6;border-bottom:none;border-radius:3px 3px 0 0;box-sizing:border-box"></div>
<svg class="abs ic" style="left:9px;top:14px" width="23" height="23" viewBox="0 0 16 16" ><path d="M0.8,3.2 L6,0.8 L15.2,4.8 V10 L9.8,15 L1.5,8 Z" fill="#23a623" stroke="#0a1c08" stroke-width="1.5"/><path d="M6,2.8 L12,5.4 L9.5,7.3 L3.6,4.5 Z" fill="#66e060"/><path d="M1.8,5 L9.5,9 V14.3 L1.8,8 Z" fill="#dcdc48" stroke="#0a1c08" stroke-width=".9"/><path d="M3,6.6 L8,9.3 M3,8.2 L8,11.2" stroke="#33500e" stroke-width=".8"/><path d="M10,8.6 L15,5 M10,8.6 V14.6" fill="none" stroke="#0a1c08" stroke-width="1.2"/><path d="M11,9.6 L14,7.3 V10 L11,12.6 Z" fill="#f0f4dc"/></svg>
<svg class="abs ic" style="left:48px;top:18px" width="22" height="22" viewBox="0 0 16 16" ><rect x="2" y="5" width="11" height="10" fill="#a8d0f4" stroke="#2a4a7a" stroke-width="1.1"/><path d="M2,5 H13 V8 H2 Z" fill="#f4f8ff" stroke="#2a4a7a" stroke-width="1"/><path d="M7,4.5 L13,0.5 L15.5,3 L10,6.5 Z" fill="#f0b060" stroke="#8a5010" stroke-width=".8"/></svg>
<svg class="abs ic" style="left:83px;top:18px" width="22" height="22" viewBox="0 0 16 16" ><g fill="#e8c828" stroke="#18180c" stroke-width="1.4"><rect x="1.5" y="1" width="5" height="4.5"/><rect x="8" y="5.5" width="5.5" height="4.5"/><rect x="9" y="11" width="5.5" height="4.5"/></g><path d="M3,5.5 V13.5 H9 M3,8 H8" fill="none" stroke="#18180c" stroke-width="1.4"/></svg>
<div class="abs" style="left:257.5px;top:17px;width:18px;height:18px;border-radius:50%;background:#fafbff;border:1px solid #c4cce0;box-sizing:border-box"></div>
<div class="abs" style="left:261px;top:14.5px;font-size:15px;font-weight:bold;line-height:20px;color:#3058c0;filter:blur(.3px)">»</div>
<div class="abs" style="left:0;top:43px;width:281px;height:715px;background:#fff;border-top:1.5px solid #b8b5a4;box-sizing:border-box"></div>
<div class="abs" style="left:0.5px;top:8px;width:3.5px;height:750px;background:#505038"></div>
<div class="abs" style="left:277px;top:43px;width:1.5px;height:715px;background:#d4d1c0"></div>
<div class="abs" style="left:278.5px;top:8px;width:2.5px;height:750px;background:#f4f3ea"></div>
<div class="abs" style="left:3px;top:349.5px;width:272px;height:4.5px;background:linear-gradient(#8a8a30,#6c6c18 40%,#74741c)"></div>
<div class="abs" style="left:21.5px;top:70px;width:0;height:270px;border-left:1px dotted #b4b4b4"></div>
<svg class="abs ic" style="left:9.5px;top:46.5px" width="22" height="21" viewBox="0 0 16 16" ><path d="M0.8,3.2 L6,0.8 L15.2,4.8 V10 L9.8,15 L1.5,8 Z" fill="#23a623" stroke="#0a1c08" stroke-width="1.5"/><path d="M6,2.8 L12,5.4 L9.5,7.3 L3.6,4.5 Z" fill="#66e060"/><path d="M1.8,5 L9.5,9 V14.3 L1.8,8 Z" fill="#dcdc48" stroke="#0a1c08" stroke-width=".9"/><path d="M3,6.6 L8,9.3 M3,8.2 L8,11.2" stroke="#33500e" stroke-width=".8"/><path d="M10,8.6 L15,5 M10,8.6 V14.6" fill="none" stroke="#0a1c08" stroke-width="1.2"/><path d="M11,9.6 L14,7.3 V10 L11,12.6 Z" fill="#f0f4dc"/></svg>
<div class="tree" style="left:37.5px;top:47.8px">ConRod&nbsp;&nbsp;(Default&lt;Display State-1&gt;)</div>
<svg class="abs ic" style="left:33.5px;top:69.9px" width="22" height="21" viewBox="0 0 16 16" ><path d="M1,3 H6 L7.5,4.5 H15 V15 H1 Z" fill="#fbe940" stroke="#c8a820" stroke-width=".9"/><text x="8.6" y="14" font-family="Liberation Serif, serif" font-weight="bold" font-size="11" text-anchor="middle" fill="#2a2408">A</text></svg>
<div class="tree" style="left:61.5px;top:71.2px">Annotations</div>
<div class="pm" style="left:17px;top:77.9px"></div>
<svg class="abs ic" style="left:33.5px;top:93.30000000000001px" width="22" height="21" viewBox="0 0 16 16" ><path d="M1,8.5 L8,1.5 L15,8 L8,13 Z" fill="#fbe83a" stroke="#8a6810" stroke-width="1"/><path d="M1,8.5 V11 L8,15.5 L15,10.5 V8 L8,13 Z" fill="#b07c18" stroke="#5a4208" stroke-width="1"/><path d="M3.5,8.3 L8,4 L12.5,8" fill="none" stroke="#fff8b0" stroke-width="1"/></svg>
<div class="tree" style="left:61.5px;top:94.6px">Design Binder</div>
<div class="pm" style="left:17px;top:101.3px"></div>
<svg class="abs ic" style="left:33.5px;top:116.69999999999999px" width="22" height="21" viewBox="0 0 16 16" ><path d="M1,2.5 H6 L7.5,4 H15 V15 H1 Z" fill="#fbe940" stroke="#c8a820" stroke-width=".9"/><path d="M4,12 L8,8 L12,12 M8,6 V8 M5,7 L6.5,8.5 M11,7 L9.5,8.5" stroke="#d04020" stroke-width="1.2" fill="none"/><path d="M3,13.5 H13" stroke="#e08020" stroke-width="1.2"/></svg>
<div class="tree" style="left:61.5px;top:118.0px">Lights and Cameras</div>
<div class="pm" style="left:17px;top:124.7px"></div>
<svg class="abs ic" style="left:33.5px;top:140.10000000000002px" width="22" height="21" viewBox="0 0 16 16" ><path d="M1,7.5 L8,1 L15,7.5 L8,14.5 Z" fill="#fff" stroke="#303038" stroke-width="1.1"/><path d="M2.5,2.5 L15,15" stroke="#303038" stroke-width="1.1"/></svg>
<div class="tree" style="left:61.5px;top:141.4px">Front Plane</div>
<svg class="abs ic" style="left:33.5px;top:163.5px" width="22" height="21" viewBox="0 0 16 16" ><path d="M1,7.5 L8,1 L15,7.5 L8,14.5 Z" fill="#fff" stroke="#303038" stroke-width="1.1"/><path d="M2.5,2.5 L15,15" stroke="#303038" stroke-width="1.1"/></svg>
<div class="tree" style="left:61.5px;top:164.8px">Top Plane</div>
<svg class="abs ic" style="left:33.5px;top:186.89999999999998px" width="22" height="21" viewBox="0 0 16 16" ><path d="M1,7.5 L8,1 L15,7.5 L8,14.5 Z" fill="#fff" stroke="#303038" stroke-width="1.1"/><path d="M2.5,2.5 L15,15" stroke="#303038" stroke-width="1.1"/></svg>
<div class="tree" style="left:61.5px;top:188.2px">Right Plane</div>
<svg class="abs ic" style="left:33.5px;top:210.29999999999995px" width="22" height="21" viewBox="0 0 16 16" ><path d="M6,1 V13.5 M3.5,4 L6,1 L8.5,4 M3.5,11 L6,13.8 L8.5,11" fill="none" stroke="#15151c" stroke-width="1.4"/><path d="M11,11 V15 M9,13 H13" stroke="#2a2a30" stroke-width="1.1"/></svg>
<div class="tree" style="left:61.5px;top:211.6px">Origin</div>
<svg class="abs ic" style="left:33.5px;top:233.7px" width="22" height="21" viewBox="0 0 16 16" ><path d="M1,4 L6,1 L11,3.5 V7 L15.5,9.5 V14 L11,16 L3,11.5 V8.5 L1,7.5 Z" fill="#e0cc38" stroke="#1c1a08" stroke-width="1.3"/><path d="M1,4 L6,6.5 L11,3.5 M6,6.5 V10 M3,8.5 L11,12.5 V16 M11,12.5 L15.5,9.5 M6,10 L11,7" fill="none" stroke="#1c1a08" stroke-width="1.1"/><path d="M2,5.2 L5.5,7" stroke="#f8f0a0" stroke-width="1"/></svg>
<div class="tree" style="left:61.5px;top:235.0px">(-) ConRod&lt;1&gt;</div>
<div class="pm" style="left:17px;top:241.7px"></div>
<svg class="abs ic" style="left:33.5px;top:257.1px" width="22" height="21" viewBox="0 0 16 16" ><path d="M1,4 L6,1 L11,3.5 V7 L15.5,9.5 V14 L11,16 L3,11.5 V8.5 L1,7.5 Z" fill="#e0cc38" stroke="#1c1a08" stroke-width="1.3"/><path d="M1,4 L6,6.5 L11,3.5 M6,6.5 V10 M3,8.5 L11,12.5 V16 M11,12.5 L15.5,9.5 M6,10 L11,7" fill="none" stroke="#1c1a08" stroke-width="1.1"/><path d="M2,5.2 L5.5,7" stroke="#f8f0a0" stroke-width="1"/></svg>
<div class="tree" style="left:61.5px;top:258.4px">(-) ConRod1&lt;1&gt;</div>
<div class="pm" style="left:17px;top:265.1px"></div>
<svg class="abs ic" style="left:33.5px;top:280.5px" width="22" height="21" viewBox="0 0 16 16" ><path d="M1,4 L6,1 L11,3.5 V7 L15.5,9.5 V14 L11,16 L3,11.5 V8.5 L1,7.5 Z" fill="#e0cc38" stroke="#1c1a08" stroke-width="1.3"/><path d="M1,4 L6,6.5 L11,3.5 M6,6.5 V10 M3,8.5 L11,12.5 V16 M11,12.5 L15.5,9.5 M6,10 L11,7" fill="none" stroke="#1c1a08" stroke-width="1.1"/><path d="M2,5.2 L5.5,7" stroke="#f8f0a0" stroke-width="1"/></svg>
<div class="tree" style="left:61.5px;top:281.8px">(-) Bolt&lt;1&gt;</div>
<div class="pm" style="left:17px;top:288.5px"></div>
<svg class="abs ic" style="left:33.5px;top:303.9px" width="22" height="21" viewBox="0 0 16 16" ><path d="M1,4 L6,1 L11,3.5 V7 L15.5,9.5 V14 L11,16 L3,11.5 V8.5 L1,7.5 Z" fill="#e0cc38" stroke="#1c1a08" stroke-width="1.3"/><path d="M1,4 L6,6.5 L11,3.5 M6,6.5 V10 M3,8.5 L11,12.5 V16 M11,12.5 L15.5,9.5 M6,10 L11,7" fill="none" stroke="#1c1a08" stroke-width="1.1"/><path d="M2,5.2 L5.5,7" stroke="#f8f0a0" stroke-width="1"/></svg>
<div class="tree" style="left:61.5px;top:305.2px">(-) Bolt&lt;2&gt;</div>
<div class="pm" style="left:17px;top:311.9px"></div>
<svg class="abs ic" style="left:33.5px;top:327.29999999999995px" width="22" height="21" viewBox="0 0 16 16" ><rect x="2" y="2" width="4.6" height="13" rx="1.6" fill="#b0b0b0" stroke="#18181c" stroke-width="1.3"/><rect x="9.4" y="2" width="4.6" height="13" rx="1.6" fill="#b0b0b0" stroke="#18181c" stroke-width="1.3"/><path d="M2,5 H6.6 M9.4,5 H14" stroke="#18181c" stroke-width="1"/><path d="M3,0.8 H13" stroke="#303034" stroke-width="1.2"/></svg>
<div class="tree" style="left:61.5px;top:328.6px">Mates</div>
<div class="pm" style="left:17px;top:335.3px"></div>
</div>
<div id="view">
<div class="abs" style="left:-8px;top:-2.5px;width:1060px;height:3px;background:#a8a595"></div>
<div class="abs" style="left:0;top:0;width:1.5px;height:738px;background:#55554a"></div>
<div class="abs" style="left:-7px;top:0.5px;width:7px;height:762px;background:#ece9d8"></div>
<div class="abs" style="left:991px;top:8px;width:19px;height:730px;background:#fbfbf6"></div>
<div class="abs" style="left:991px;top:11px;width:19px;height:19px;background:#e9e8e0;border-radius:2px"></div>
<div class="abs" style="left:996.5px;top:18px;width:0;height:0;border-left:4px solid transparent;border-right:4px solid transparent;border-bottom:5px solid #f8f8f4"></div>
<div class="abs" style="left:991px;top:718px;width:19px;height:19px;background:#eeede6;border-radius:2px"></div>
<div class="abs" style="left:996.5px;top:725px;width:0;height:0;border-left:4px solid transparent;border-right:4px solid transparent;border-top:5px solid #d0cfc6"></div>
<div class="abs" style="left:990px;top:6.5px;width:22px;height:2px;background:#111"></div>
<div class="abs" style="left:1010px;top:0;width:2px;height:8.5px;background:#111"></div>
<div class="abs" style="left:10px;top:739px;width:980px;height:21px;background:linear-gradient(#f3f3ec,#fcfcf8)"></div>
<div class="abs" style="left:13px;top:740px;width:19px;height:19px;background:#e6e5dc;border-radius:2px"></div>
<div class="abs" style="left:18px;top:745.5px;width:0;height:0;border-top:4px solid transparent;border-bottom:4px solid transparent;border-right:5px solid #fafaf6"></div>
<div class="abs" style="left:969px;top:740px;width:19px;height:19px;background:#efeee8;border-radius:2px"></div>
<div class="abs" style="left:977px;top:745.5px;width:0;height:0;border-top:4px solid transparent;border-bottom:4px solid transparent;border-left:5px solid #d4d3ca"></div>
<div class="abs" style="left:0;top:738px;width:10px;height:22px;background:#f0efe6;border:1.5px solid #333;border-top:none;box-sizing:border-box"></div>
<div class="abs" style="left:0;top:715px;width:133px;height:23.5px;background:#ffffd0;border:1.6px solid #1a1a14;box-sizing:border-box"></div>
<div class="abs" style="left:115.5px;top:715px;width:1.6px;height:23px;background:#1a1a14"></div>
<div class="abs" style="left:116.5px;top:716.5px;width:15px;height:20.5px;background:#ffffd6"></div>
<div class="abs" style="left:28px;top:720px;font-family:'Liberation Sans',sans-serif;font-size:13px;line-height:16px;color:#222;filter:blur(.3px)">Custom</div>
<div class="dd" style="left:120.5px;top:724.5px;border-top-color:#111"></div>
</div>
<div class="abs" style="left:1298px;top:171px;width:35px;height:761px;background:#ece9d8"></div>
<div class="abs" style="left:1278px;top:176.5px;width:22px;height:2px;background:#111"></div>
<div class="abs" style="left:1298.5px;top:170px;width:2px;height:8.5px;background:#111"></div>
<div class="abs" style="left:1279px;top:908px;width:20px;height:24px;background:#ece9d8"></div>
<div class="abs" style="left:1302px;top:205px;width:27px;height:32px;background:#fdfdfa;border-radius:3px 0 0 3px"></div>
<div class="abs" style="left:1328.5px;top:206px;width:2px;height:30px;background:#f0a860"></div>
<div class="abs" style="left:1302px;top:239px;width:27px;height:33px;background:#dfe4ee;border-top:1px solid #b8c0d0;box-sizing:border-box"></div>
<div class="abs" style="left:1302px;top:273px;width:27px;height:34px;background:#f0eee6;border-top:1px solid #c8c8d0;border-bottom:1px solid #c8c8d0;box-sizing:border-box"></div>
<svg class="abs ic" style="left:1305px;top:211px" width="20" height="20" viewBox="0 0 16 16" ><path d="M1,8.5 L8,2 L15,8.5" fill="none" stroke="#18180c" stroke-width="1.6"/><path d="M3,8 V14.5 H13 V8 L8,3.5 Z" fill="#f8e8a0" stroke="#18180c" stroke-width="1.2"/><rect x="6.5" y="9.5" width="3" height="5" fill="#c89830" stroke="#18180c" stroke-width=".9"/><path d="M10,1 L14,0.5 L13.5,5" fill="#d86040"/><path d="M1.5,15.3 H14.5" stroke="#18180c" stroke-width="1.3"/></svg>
<svg class="abs ic" style="left:1304px;top:244px" width="21" height="21" viewBox="0 0 16 16" ><path d="M1,8 L4,5.5 L7,8 V15 H1 Z" fill="#2a8a30" stroke="#0c2810" stroke-width="1.2"/><path d="M6,5 L9,2 L11,5 V15 H6 Z" fill="#e0c030" stroke="#2c2408" stroke-width="1.1"/><path d="M10.5,5 L13,1.5 L15,5 V14.5 H10.5 Z" fill="#4858b0" stroke="#10143a" stroke-width="1.1"/><path d="M1,15 H15" stroke="#0c1c10" stroke-width="1.4"/></svg>
<svg class="abs ic" style="left:1305px;top:279px" width="21" height="21" viewBox="0 0 16 16" ><path d="M1,3 H6 L7.5,4.5 H14 V12 H1 Z" fill="#f4e698" stroke="#c8b048" stroke-width="1"/><circle cx="9" cy="9" r="3.6" fill="#f8f8f4" stroke="#a8a078" stroke-width="1.3"/><path d="M11.5,11.5 L15,15.5" stroke="#b0a070" stroke-width="1.8"/></svg>
<div class="abs" style="left:1308px;top:313.5px;width:18px;height:18px;border-radius:50%;background:#fafbff;border:1px solid #c0c8e0;box-sizing:border-box"></div>
<div class="abs" style="left:1311.5px;top:311.0px;font-size:15px;font-weight:bold;line-height:20px;color:#3058c0;filter:blur(.3px)">«</div>
<div class="abs" style="left:1308px;top:815px;width:18px;height:18px;border-radius:50%;background:#fafbff;border:1px solid #c0c8e0;box-sizing:border-box"></div>
<div class="abs" style="left:1311.5px;top:812.5px;font-size:15px;font-weight:bold;line-height:20px;color:#3058c0;filter:blur(.3px)">«</div>
<div class="abs" style="left:1310.5px;top:336px;width:2px;height:474px;background:#b4b1a0"></div>
<div class="abs" style="left:1316.5px;top:336px;width:2px;height:474px;background:#f6f4ea"></div>
<div id="status">
<span style="left:1px;letter-spacing:0.05px">Ready</span>
<span style="left:1106px">Editing Assembly</span>
<div class="abs" style="left:1098px;top:3px;width:1px;height:17px;background:#cfcbba"></div>
<div class="abs" style="left:1217px;top:3px;width:1px;height:17px;background:#cfcbba"></div>
<div class="abs" style="left:1236px;top:3px;width:1px;height:17px;background:#cfcbba"></div>
<div class="abs" style="left:1252px;top:3.5px;width:20px;height:16px;background:#fff;border:1px solid #b0ac9c;border-top-color:#55554a;box-sizing:border-box"></div>
</div>
<div id="bottomblue"></div>
</div>
<div class="abs" style="left:0;top:1080px;width:1441px;height:1px;background:#111"></div>
<div class="abs" style="left:1275px;top:1080px;width:1px;height:1px;background:#0000ee"></div>
<div class="abs" style="left:1277px;top:1080px;width:1px;height:1px;background:#004400"></div>
<div class="abs" style="left:1280px;top:1080px;width:1px;height:1px;background:#880000"></div>
<div class="abs" style="left:1281px;top:1080px;width:1px;height:1px;background:#00cc00"></div>
<div class="abs" style="left:1284px;top:1080px;width:1px;height:1px;background:#552200"></div>
<div class="abs" style="left:1285px;top:1080px;width:1px;height:1px;background:#000066"></div>
<div class="abs" style="left:1288px;top:1080px;width:1px;height:1px;background:#990000"></div>
<div class="abs" style="left:1289px;top:1080px;width:1px;height:1px;background:#0044ff"></div>
<div class="abs" style="left:1292px;top:1080px;width:1px;height:1px;background:#dd0000"></div>
<svg class="abs" style="left:0;top:0" width="1441" height="1081" viewBox="0 0 1441 1081">
<defs>
  <linearGradient id="gCyl" x1="0" y1="0" x2="0" y2="1">
    <stop offset="0" stop-color="#707078"/><stop offset="0.3" stop-color="#7b7b90"/><stop offset="0.62" stop-color="#8e8ebc"/><stop offset="1" stop-color="#7c7c9a"/>
  </linearGradient>
  <linearGradient id="gHole" x1="0" y1="0" x2="0" y2="1">
    <stop offset="0" stop-color="#8080a4"/><stop offset="0.4" stop-color="#9192c2"/><stop offset="1" stop-color="#707078"/>
  </linearGradient>
  <linearGradient id="gBore" x1="0.2" y1="0" x2="0.55" y2="1">
    <stop offset="0" stop-color="#7c7ca0"/><stop offset="0.25" stop-color="#8c8cba"/><stop offset="0.42" stop-color="#9596c8"/><stop offset="0.66" stop-color="#8080a0"/><stop offset="1" stop-color="#6c6c74"/>
  </linearGradient>
  <linearGradient id="gSide" x1="0" y1="0" x2="1" y2="0">
    <stop offset="0" stop-color="#9193c3"/><stop offset="1" stop-color="#8a8cbc"/>
  </linearGradient>
  <linearGradient id="gBlock" x1="0" y1="0" x2="0" y2="1">
    <stop offset="0" stop-color="#9596c8"/><stop offset="1" stop-color="#8485a6"/>
  </linearGradient>
  <clipPath id="cpHoleS"><ellipse cx="822.7" cy="260.7" rx="28" ry="31"/></clipPath>
  <clipPath id="cpBore"><ellipse cx="820" cy="765" rx="61" ry="70"/></clipPath>
  <clipPath id="cpSil"><path d="M797.5,296.0 C797.2,303.3 796.2,332.7 796.0,340.0 C794.7,376.7 789.3,523.3 788.0,560.0 C787.9,562.5 788.8,566.5 787.5,575.0 C786.2,583.5 782.2,599.8 780.0,611.0 C777.8,622.2 776.7,632.8 774.0,642.0 C771.3,651.2 769.5,656.9 764.0,666.0 C758.5,675.1 744.8,691.4 741.0,696.5 C739.1,700.2 732.6,710.4 729.5,719.0 C726.4,727.6 723.4,738.3 722.6,748.0 C721.8,757.7 722.5,766.3 724.6,777.0 C726.7,787.7 729.4,800.7 735.0,812.0 C740.6,823.3 749.7,835.9 758.5,845.0 C767.3,854.1 777.9,861.5 788.0,866.5 C798.1,871.5 809.3,873.7 819.0,875.0 C828.7,876.3 836.7,875.7 846.0,874.5 C855.3,873.3 863.8,871.2 875.0,868.0 C886.2,864.8 903.3,859.2 913.0,855.0 C922.7,850.8 926.8,847.8 933.0,843.0 C939.2,838.2 945.5,832.3 950.0,826.5 C954.5,820.7 957.5,815.2 960.0,808.0 C962.5,800.8 964.2,787.2 965.0,783.0 C965.8,782.2 968.8,778.8 969.5,778.0 C969.6,776.7 969.9,771.3 970.0,770.0 C969.2,769.4 965.8,767.1 965.0,766.5 C964.9,763.4 965.3,754.9 964.5,748.0 C963.7,741.1 962.2,731.4 960.0,725.0 C957.8,718.6 954.7,716.0 951.0,709.5 C947.3,703.0 942.3,694.2 938.0,686.0 C933.7,677.8 928.4,667.5 925.0,660.0 C921.6,652.5 919.8,647.8 917.5,641.0 C915.2,634.2 912.9,626.0 911.0,619.0 C909.1,612.0 907.7,608.5 906.0,599.0 C904.3,589.5 901.8,568.2 901.0,562.0 C898.8,525.0 889.8,377.0 887.5,340.0 C886.9,331.3 884.6,296.7 884.0,288.0 C869.6,289.3 811.9,294.7 797.5,296.0 Z"/></clipPath>
  <filter id="soft" x="-5%" y="-5%" width="110%" height="110%"><feGaussianBlur stdDeviation="0.7"/></filter>
</defs>
<g filter="url(#soft)" stroke-linejoin="round" stroke-linecap="round">
<path d="M797.5,296.0 C797.2,303.3 796.2,332.7 796.0,340.0 C794.7,376.7 789.3,523.3 788.0,560.0 C787.9,562.5 788.8,566.5 787.5,575.0 C786.2,583.5 782.2,599.8 780.0,611.0 C777.8,622.2 776.7,632.8 774.0,642.0 C771.3,651.2 769.5,656.9 764.0,666.0 C758.5,675.1 744.8,691.4 741.0,696.5 C739.1,700.2 732.6,710.4 729.5,719.0 C726.4,727.6 723.4,738.3 722.6,748.0 C721.8,757.7 722.5,766.3 724.6,777.0 C726.7,787.7 729.4,800.7 735.0,812.0 C740.6,823.3 749.7,835.9 758.5,845.0 C767.3,854.1 777.9,861.5 788.0,866.5 C798.1,871.5 809.3,873.7 819.0,875.0 C828.7,876.3 836.7,875.7 846.0,874.5 C855.3,873.3 863.8,871.2 875.0,868.0 C886.2,864.8 903.3,859.2 913.0,855.0 C922.7,850.8 926.8,847.8 933.0,843.0 C939.2,838.2 945.5,832.3 950.0,826.5 C954.5,820.7 957.5,815.2 960.0,808.0 C962.5,800.8 964.2,787.2 965.0,783.0 C965.8,782.2 968.8,778.8 969.5,778.0 C969.6,776.7 969.9,771.3 970.0,770.0 C969.2,769.4 965.8,767.1 965.0,766.5 C964.9,763.4 965.3,754.9 964.5,748.0 C963.7,741.1 962.2,731.4 960.0,725.0 C957.8,718.6 954.7,716.0 951.0,709.5 C947.3,703.0 942.3,694.2 938.0,686.0 C933.7,677.8 928.4,667.5 925.0,660.0 C921.6,652.5 919.8,647.8 917.5,641.0 C915.2,634.2 912.9,626.0 911.0,619.0 C909.1,612.0 907.7,608.5 906.0,599.0 C904.3,589.5 901.8,568.2 901.0,562.0 C898.8,525.0 889.8,377.0 887.5,340.0 C886.9,331.3 884.6,296.7 884.0,288.0 C869.6,289.3 811.9,294.7 797.5,296.0 Z" fill="#7e7e84" stroke="#26263c" stroke-width="1.5"/>
<g clip-path="url(#cpSil)">
<path d="M858.5,306 L884,286 L889,340 L903,562 L908,599 L879.8,600.7 L872.7,602 L873.3,560 L860,340 Z" fill="url(#gSide)"/>
<path d="M872.7,602 L908,598 L913,619 L919.5,641 L884,643 L874,634.5 L871.4,619 Z" fill="url(#gBlock)"/>
<path d="M874.0,634.5 C881.2,635.6 910.2,639.9 917.5,641.0 C918.8,644.2 921.6,652.5 925.0,660.0 C928.4,667.5 933.7,677.8 938.0,686.0 C942.3,694.2 947.3,703.0 951.0,709.5 C954.7,716.0 957.8,718.6 960.0,725.0 C962.2,731.4 963.7,741.1 964.5,748.0 C965.3,754.9 964.9,763.4 965.0,766.5 C965.8,767.1 969.2,769.4 970.0,770.0 C969.9,771.3 969.6,776.7 969.5,778.0 C968.8,778.8 965.8,782.2 965.0,783.0 C964.2,787.2 962.5,800.8 960.0,808.0 C957.5,815.2 954.5,820.7 950.0,826.5 C945.5,832.3 939.2,838.2 933.0,843.0 C926.8,847.8 922.7,850.8 913.0,855.0 C903.3,859.2 886.2,864.8 875.0,868.0 C863.8,871.2 853.8,873.2 846.0,874.5 C838.2,875.8 831.0,875.8 828.0,876.0 C828.7,875.6 828.3,874.8 832.0,873.5 C835.7,872.2 844.2,870.2 850.0,868.0 C855.8,865.8 861.1,863.5 866.6,860.5 C872.1,857.5 877.7,854.8 883.3,850.0 C888.9,845.2 895.8,836.2 900.0,831.5 C904.2,826.8 906.1,826.8 908.3,821.5 C910.5,816.2 911.9,806.6 913.3,800.0 C914.7,793.4 916.0,784.7 916.6,781.6 C917.7,781.6 922.1,781.6 923.2,781.6 C923.5,779.9 925.0,776.9 925.0,771.6 C925.0,766.3 924.6,757.8 923.2,750.0 C921.8,742.2 919.9,733.3 916.6,725.0 C913.3,716.7 907.3,706.9 903.3,700.0 C899.3,693.1 896.2,690.2 892.7,683.6 C889.2,677.0 885.5,668.5 882.4,660.3 C879.3,652.1 875.4,638.8 874.0,634.5 Z" fill="#8586a5"/>
<path d="M925,771.6 L923.2,781.6 L916.6,781.6 L913.3,800 L908.3,821.5 L900,831.5 L883.3,850 L893,849 L911,833 L922,815 L930,795 L934,770 L931,750 L923.2,750 Z" fill="#9293c8"/>
<path d="M828,877 L846,875.5 L875,869 L913,856 L934,844 L950,826 L940,826 L924,838 L900,853 L880,861 L866.6,865 L850,869.5 L832,874 Z" fill="#6a6a7e"/>
<path d="M950,772 L953,745 L949,722 L960,742 L966,766 L972,775 L962,800 L950,822 L938,836 L946,815 Z" fill="#8f90c2"/>
</g>
<path d="M802.5,316 L814,312 L813.3,340 L806,560 L807.5,577 L808.5,611 L809.5,660 L813,669 L821,673.5 L800,672 L793,666 L790,655 L792,611 L796,577 L796,560 L802,340 Z" fill="#9596c8"/>
<path d="M814,312 L840,306.5 L852.5,316.7 L855,340 L865,560 L865.5,577 L863,611 L862.5,662 L861,670 L856,674 L821,673.5 L813,669 L809.5,660 L808.5,611 L807.5,577 L806,560 L813.3,340 Z" fill="#808085"/>
<g fill="none" stroke="#1e1e3a" stroke-width="1.6">
  <path d="M802.5,316 L802,340 L796,560 L796,577 L792,611 L790,655 Q790.5,664 796,669 Q802,673 821,673.5 L854,674 Q861.5,673 862.5,664 L863,611 L865.5,577 L865,560 L855,340 L852.5,316.7 L840,306.5"/>
  <path d="M814,312 L813.3,340 L806,560 L807.5,577 L808.5,611 L809.5,658 Q810,668 821,673.5"/>
  <path d="M858.5,306.0 C858.8,311.7 859.8,334.3 860.0,340.0 C862.2,376.7 871.1,523.3 873.3,560.0 C873.2,567.0 872.8,595.0 872.7,602.0 C872.5,604.8 871.2,613.6 871.4,619.0 C871.6,624.4 872.2,627.6 874.0,634.5 C875.8,641.4 879.3,652.1 882.4,660.3 C885.5,668.5 889.2,677.0 892.7,683.6 C896.2,690.2 899.3,693.1 903.3,700.0 C907.3,706.9 913.3,716.7 916.6,725.0 C919.9,733.3 921.8,742.2 923.2,750.0 C924.6,757.8 925.0,766.3 925.0,771.6 C925.0,776.9 923.5,779.9 923.2,781.6"/><path d="M923.2,781.6 L916.6,781.6"/><path d="M916.6,781.6 C916.0,784.7 914.7,793.4 913.3,800.0 C911.9,806.6 910.5,816.2 908.3,821.5 C906.1,826.8 904.2,826.8 900.0,831.5 C895.8,836.2 888.9,845.2 883.3,850.0 C877.7,854.8 872.1,857.5 866.6,860.5 C861.1,863.5 855.8,865.8 850.0,868.0 C844.2,870.2 835.0,872.6 832.0,873.5"/>
  <path d="M879.8,600.7 L906,598"/>
  <path d="M788,572.5 L796,572.5 M780,611 L792,611 M865.5,577 L872.5,577 M863,611 L871.8,611 M864,625 L872,625"/>
  <path d="M802.5,316.7 L811,316.7"/>
  <path d="M790,668 Q800,679 821,678.5 L856,679 Q864,678 866,670"/>
</g>
<g fill="none" stroke="#1e1e38" stroke-width="1.7" clip-path="url(#cpSil)">
<path d="M885.0,643.5 C886.7,647.9 891.8,661.1 895.0,670.0 C898.2,678.9 899.9,686.9 904.4,696.6 C908.9,706.3 917.6,717.4 922.0,728.0 C926.4,738.6 929.7,749.7 931.0,760.0 C932.3,770.3 931.8,780.0 930.0,790.0 C928.2,800.0 924.7,811.3 920.0,820.0 C915.3,828.7 908.7,836.0 902.0,842.0 C895.3,848.0 883.7,853.7 880.0,856.0"/>
<path d="M890.2,643.5 C891.8,647.8 896.8,660.6 900.0,669.0 C903.2,677.4 904.6,683.0 909.6,694.0 C914.6,705.0 925.3,723.2 930.0,735.0 C934.7,746.8 937.0,755.0 938.0,765.0 C939.0,775.0 938.0,785.5 936.0,795.0 C934.0,804.5 931.0,813.7 926.0,822.0 C921.0,830.3 912.7,839.0 906.0,845.0 C899.3,851.0 889.3,855.8 886.0,858.0"/>
<path d="M901.2,640.2 C903.0,644.5 908.5,657.5 912.0,666.0 C915.5,674.5 918.2,682.1 922.5,691.4 C926.8,700.7 934.2,711.9 938.0,722.0 C941.8,732.1 944.0,741.3 945.0,752.0 C946.0,762.7 945.8,775.3 944.0,786.0 C942.2,796.7 938.7,807.0 934.0,816.0 C929.3,825.0 922.8,833.2 916.0,840.0 C909.2,846.8 896.8,854.2 893.0,857.0"/>
<path d="M907.0,640.2 C908.7,644.3 913.5,656.7 917.0,665.0 C920.5,673.3 923.0,680.5 927.7,690.0 C932.4,699.5 941.0,712.0 945.0,722.0 C949.0,732.0 951.0,739.5 952.0,750.0 C953.0,760.5 952.7,774.7 951.0,785.0 C949.3,795.3 946.5,803.5 942.0,812.0 C937.5,820.5 931.0,829.0 924.0,836.0 C917.0,843.0 904.0,851.0 900.0,854.0"/>
<path d="M936.0,700.0 C938.7,705.0 948.3,720.0 952.0,730.0 C955.7,740.0 957.3,749.2 958.0,760.0 C958.7,770.8 958.0,785.0 956.0,795.0 C954.0,805.0 950.3,812.5 946.0,820.0 C941.7,827.5 936.8,834.2 930.0,840.0 C923.2,845.8 909.2,852.5 905.0,855.0"/>
<path d="M885,643.5 L890.2,643.5 M901.2,640.2 L907,640.2 M904.4,696.6 L911,698 M922.5,691.4 L929,690"/>
</g>
<path d="M893.3,753.3 L900,750 L923.2,773.2 L923.2,781.6 L916.6,781.6 L895,761.6 Z" fill="#88888e" stroke="#23233c" stroke-width="1.1"/>
<g fill="none" stroke="#23233c" stroke-width="1.2">
  <path d="M741,696.5 L771,696.5"/><path d="M771.0,696.5 C774.3,694.8 784.2,689.2 791.0,686.5 C797.8,683.8 804.8,681.4 812.0,680.4 C819.2,679.4 827.3,679.0 834.0,680.4 C840.7,681.8 845.9,683.8 852.3,688.6 C858.7,693.4 867.0,702.1 872.6,709.0 C878.2,715.9 882.5,722.6 886.0,730.0 C889.5,737.4 892.1,749.4 893.3,753.3"/>
  <path d="M800.0,690.0 C803.3,689.2 813.7,685.2 820.0,685.0 C826.3,684.8 832.0,686.7 838.0,689.0 C844.0,691.3 851.0,694.8 856.0,699.0 C861.0,703.2 864.0,708.3 868.0,714.0 C872.0,719.7 877.0,726.7 880.0,733.0 C883.0,739.3 885.0,748.8 886.0,752.0"/>
  <path d="M735,707 L758.5,721.7"/>
  <path d="M875,803.2 L906.6,823.2"/>
</g>
<ellipse cx="820" cy="765" rx="61" ry="70" fill="url(#gBore)"/>
<g clip-path="url(#cpBore)">
  <path d="M755,700 L813,688 L830,699 L813,718 L766,727 L750,735 Z" fill="#7b7b9a"/>
  <ellipse cx="872" cy="750" rx="61" ry="70" fill="#ffffff" stroke="#33334a" stroke-width="1"/>
  <path d="M766,726.6 L813,718" fill="none" stroke="#23233c" stroke-width="1.2"/>
</g>
<ellipse cx="820" cy="765" rx="61" ry="70" fill="none" stroke="#23233c" stroke-width="1.3"/>
<ellipse cx="746" cy="731" rx="6.5" ry="7.5" fill="#f4f4f8" stroke="#23233c" stroke-width="1.4"/>
<ellipse cx="882" cy="826.8" rx="6.5" ry="7.8" fill="#f4f4f8" stroke="#23233c" stroke-width="1.4"/>
<path d="M816.9,211.3 L854.3,205.7 A42,48.3 0 0 1 865.1,301.5 L827.7,307.1 Z" fill="url(#gCyl)" stroke="#2c2c40" stroke-width="1.2"/>
<ellipse cx="859.7" cy="253.6" rx="42" ry="48.3" fill="url(#gCyl)"/>
<path d="M854.3,205.7 A42,48.3 0 0 1 865.1,301.5" fill="none" stroke="#2c2c40" stroke-width="1.2"/>
<path d="M860,292 L885,290.3 L886.5,318 L858.8,318 L858.3,306.7 Z" fill="#9193c3"/>
<path d="M860,292 L885,290.3" fill="none" stroke="#2c2c40" stroke-width="1.1"/>
<path d="M885,290.3 L886.5,318 M860,292 L858.3,306.7 L859,318" fill="none" stroke="#23233c" stroke-width="1.2"/>
<ellipse cx="822.3" cy="259.2" rx="42" ry="48.3" fill="#7d7d83" stroke="#23233c" stroke-width="1.3"/>
<ellipse cx="822.7" cy="260.7" rx="28" ry="31" fill="url(#gHole)"/>
<g clip-path="url(#cpHoleS)">
  <ellipse cx="860.1" cy="255.1" rx="28" ry="31" fill="#ffffff" stroke="#33334a" stroke-width="1"/>
</g>
<ellipse cx="822.7" cy="260.7" rx="28" ry="31" fill="none" stroke="#23233c" stroke-width="1.3"/>
</g>
<g filter="url(#soft)">
  <path d="M397.5,833 L397.5,806 L394,806 L400.6,795 L407,806 L403.5,806 L403.5,833 Z" fill="#1f6e2c"/>
  <path d="M388,834 L424,831.5 L424,828.5 L434,834 L424,839.5 L424,836.5 L388,839 Z" fill="#d22222"/>
  <path d="M386,834 L408,832.5 L408,837 L386,839.5 Z" fill="#2a2aa8"/>
  <circle cx="387.7" cy="836.7" r="5" fill="#2222a0"/>
  <text x="396.5" y="790" font-family="Liberation Sans, sans-serif" font-size="11" fill="#5a8a66">Y</text>
  <text x="435.5" y="838.5" font-family="Liberation Sans, sans-serif" font-size="11" fill="#e04040">X</text>
  <text x="375.5" y="841" font-family="Liberation Sans, sans-serif" font-size="11.5" font-weight="bold" fill="#2a2aa8">Z</text>
</g>
</svg>
</body>
</html>
